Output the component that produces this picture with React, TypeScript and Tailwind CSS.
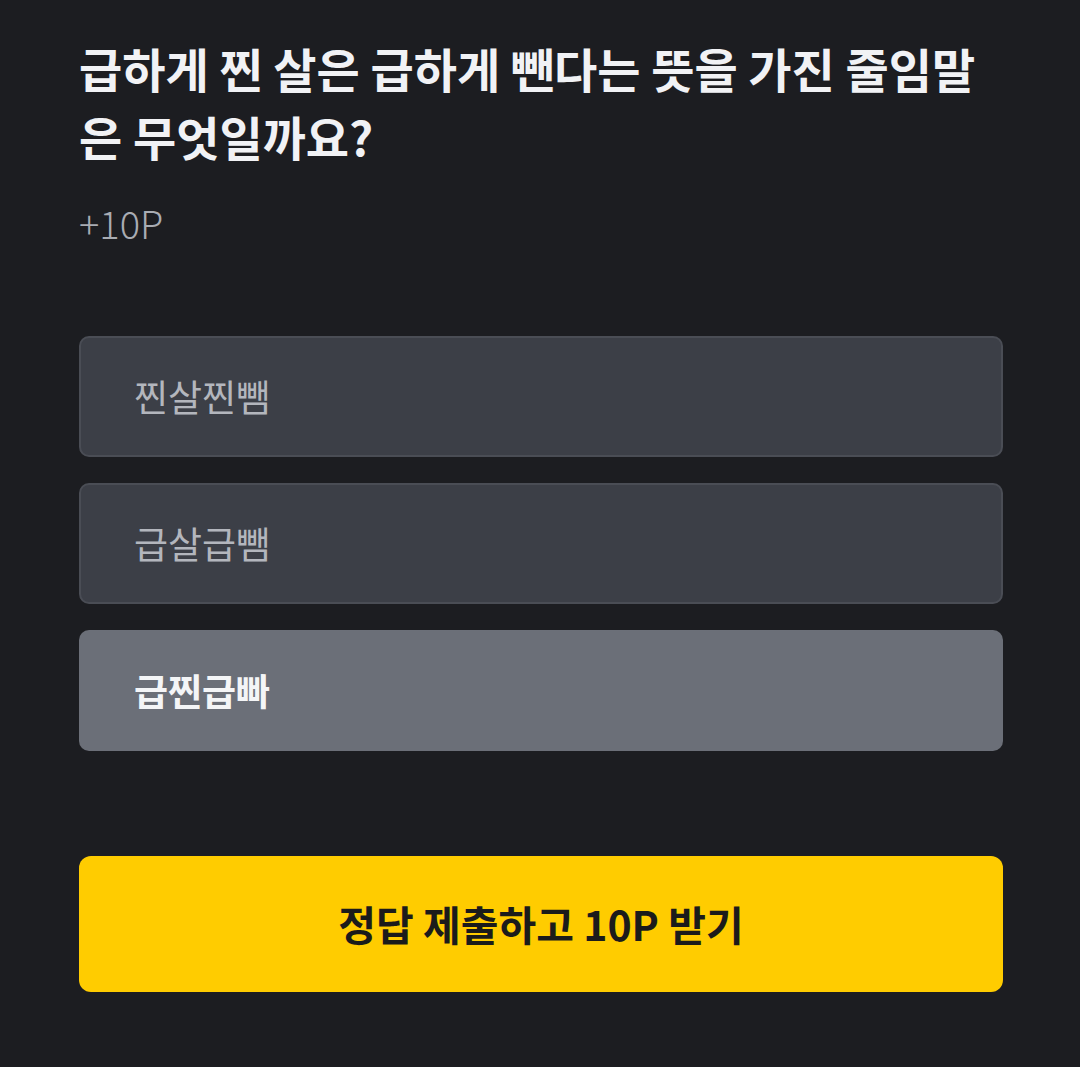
import { useState } from "react";

const options = ["찐살찐뺌", "급살급뺌", "급찐급빠"];

export default function App() {
  const [selected, setSelected] = useState(2);

  return (
    <div
      className="min-h-[1067px] w-[1080px] bg-[#1c1d21] pl-[79px] pr-[77px] pt-[34px]"
      style={{ fontFamily: '"Noto Sans CJK KR", "Noto Sans", sans-serif' }}
    >
      <h1 className="text-[47px] font-bold leading-[68px] text-[#f1f2f5]">
        급하게 찐 살은 급하게 뺀다는 뜻을 가진 줄임말은 무엇일까요?
      </h1>
      <p className="mt-[29px] text-[38px] font-light leading-[48px] text-[#a9acb3]">+10P</p>

      <div className="mt-[89px] flex flex-col gap-[26px]">
        {options.map((label, i) => {
          const active = i === selected;
          return (
            <button
              key={label}
              type="button"
              onClick={() => setSelected(i)}
              className={
                active
                  ? "flex h-[121px] items-center rounded-[10px] bg-[#6b6f78] px-[55px] text-left text-[37px] font-bold text-[#f4f5f7]"
                  : "flex h-[121px] items-center rounded-[10px] border-2 border-[#4a4d55] bg-[#3c3f47] px-[53px] text-left text-[37px] font-normal text-[#b3b6bd]"
              }
            >
              {label}
            </button>
          );
        })}
      </div>

      <button
        type="button"
        className="mt-[105px] flex h-[136px] w-full items-center justify-center rounded-[12px] bg-[#ffcc00] text-[41px] font-bold text-[#1b1b1b]"
      >
        정답 제출하고 10P 받기
      </button>
    </div>
  );
}
